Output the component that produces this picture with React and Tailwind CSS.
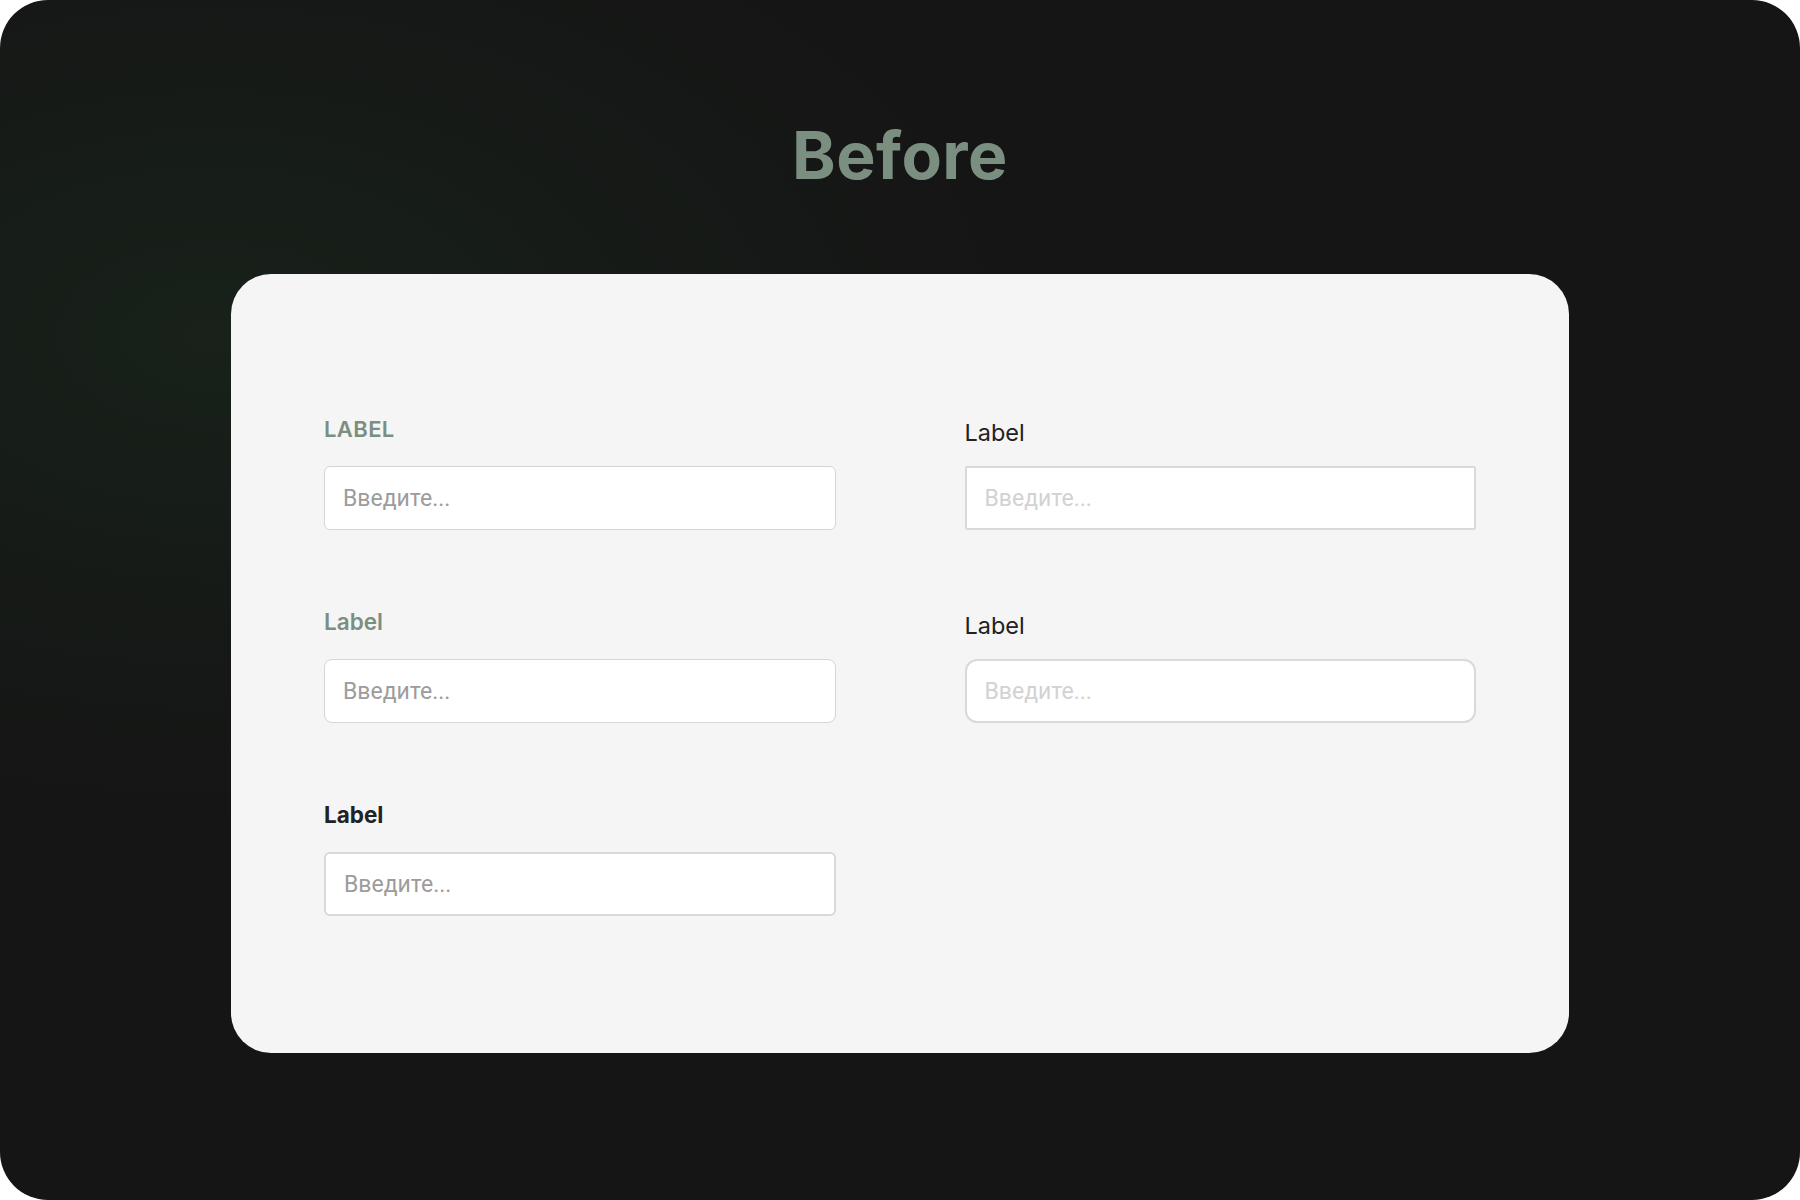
const fields = [
  {
    label: 'LABEL',
    labelClass: 'text-[22px] font-semibold tracking-[0.4px] text-[#7b8f81]',
    inputClass: 'border border-[#d6d6d6] rounded-[6px] placeholder:text-[#9c9c9c]',
  },
  {
    label: 'Label',
    labelClass: 'text-[23.5px] font-normal text-[#222] mt-[4px] -mb-[4px]',
    inputClass: 'border-2 border-[#d9d9d9] rounded-[2px] placeholder:text-[#d2d2d2]',
  },
  {
    label: 'Label',
    labelClass: 'text-[22.5px] font-semibold text-[#7b8f81]',
    inputClass: 'border border-[#d6d6d6] rounded-[8px] placeholder:text-[#9c9c9c]',
  },
  {
    label: 'Label',
    labelClass: 'text-[23.5px] font-normal text-[#222] mt-[4px] -mb-[4px]',
    inputClass: 'border-2 border-[#d9d9d9] rounded-[12px] placeholder:text-[#d2d2d2]',
  },
  {
    label: 'Label',
    labelClass: 'text-[22.5px] font-bold text-[#222]',
    inputClass: 'border-2 border-[#d9d9d9] rounded-[6px] placeholder:text-[#9c9c9c]',
  },
];

const Field = ({ label, labelClass, inputClass }) => (
  <div className="flex flex-col">
    <label className={`font-['Inter',sans-serif] leading-[30px] ${labelClass}`}>{label}</label>
    <input
      type="text"
      placeholder="Введите..."
      className={`mt-[22px] h-[64px] w-full bg-white px-[18px] text-[23px] font-['Roboto',sans-serif] outline-none ${inputClass}`}
    />
  </div>
);

export default function App() {
  return (
    <div className="w-[1800px] h-[1200px] bg-white">
      <div className="w-full h-full rounded-[48px] overflow-hidden bg-[#151515] bg-[radial-gradient(ellipse_45%_40%_at_12%_28%,#18211a_0%,#161a17_55%,#151515_100%)] flex flex-col items-center">
        <h1 className="mt-[122px] text-[66px] leading-[66px] font-bold font-['Inter',sans-serif] text-[#7b8f81] tracking-[0.5px]">
          Before
        </h1>
        <div className="mt-[86px] w-[1338px] h-[779px] rounded-[40px] bg-[#f5f5f5] px-[93px] pt-[140px]">
          <div className="grid grid-cols-2 gap-x-[129px] gap-y-[77px]">
            {fields.map((f, i) => (
              <Field key={i} {...f} />
            ))}
          </div>
        </div>
      </div>
    </div>
  );
}
